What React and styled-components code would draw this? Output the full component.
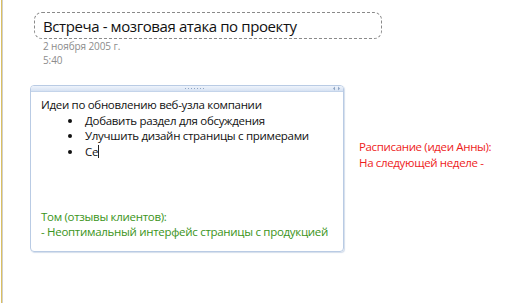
import React from 'react';
import styled, { createGlobalStyle } from 'styled-components';

const GlobalStyle = createGlobalStyle`
  html, body {
    margin: 0;
    padding: 0;
    background: #ffffff;
  }
  body {
    font-family: 'Open Sans', 'Noto Sans', sans-serif;
  }
`;

const Page = styled.div`
  width: 510px;
  height: 303px;
  box-sizing: border-box;
  position: relative;
  overflow: hidden;
  display: flex;
  flex-direction: column;
  padding: 12px 0 0 30px;

  &::before {
    content: '';
    position: absolute;
    left: 1px;
    top: 0;
    bottom: 0;
    width: 1px;
    background: #dcc060;
    box-shadow: 1px 0 0 #d0d0d0;
  }
`;

const Header = styled.div`
  display: flex;
  flex-direction: column;
  margin-left: 4px;
`;

const TitleBox = styled.div`
  width: 348px;
  height: 27px;
  box-sizing: border-box;
  border: 1px dashed #8a8a8a;
  border-radius: 8px;
  padding: 0 0 0 8px;
  display: flex;
  align-items: center;
  font-size: 15px;
  letter-spacing: -0.4px;
  color: #111;
`;

const Meta = styled.div`
  font-size: 10px;
  color: #8c8c8c;
  line-height: 14px;
  padding-left: 9px;
  letter-spacing: -0.1px;

  &:first-of-type {
    margin-top: 4px;
  }
`;

const Row = styled.div`
  display: flex;
  align-items: flex-start;
  margin-top: 18px;
`;

const Note = styled.div`
  width: 314px;
  height: 167px;
  box-sizing: border-box;
  border: 1px solid #b9cbe4;
  border-radius: 4px;
  box-shadow: 1px 1px 1px rgba(160, 180, 210, 0.45);
  display: flex;
  flex-direction: column;
  overflow: hidden;
`;

const Grip = styled.div`
  height: 5px;
  background: linear-gradient(#eef3fb, #d6e2f3);
  border-bottom: 1px solid #c4d4ea;
  display: flex;
  align-items: center;
  justify-content: center;
  position: relative;
`;

const Dots = styled.span`
  width: 20px;
  height: 1px;
  margin-left: 14px;
  background-image: radial-gradient(circle, #8fa5c4 0.6px, transparent 0.7px);
  background-size: 3px 1px;
`;

const Arrows = styled.svg`
  position: absolute;
  right: 2px;
  top: 0;
`;

const Body = styled.div`
  flex: 1;
  padding: 5px 6px 0 10px;
  font-size: 11.5px;
  line-height: 15.7px;
  letter-spacing: -0.3px;
  white-space: nowrap;
  color: #111;
  display: flex;
  flex-direction: column;
`;

const List = styled.ul`
  margin: 0;
  padding: 0;
  list-style: none;
`;

const Item = styled.li`
  display: flex;
  align-items: center;

  &::before {
    content: '';
    width: 4px;
    height: 4px;
    border-radius: 50%;
    background: #111;
    margin: 0 13px 0 27px;
  }
`;

const Caret = styled.span`
  display: inline-block;
  width: 1px;
  height: 13px;
  background: #222;
  vertical-align: -2px;
`;

const Feedback = styled.div`
  margin-top: auto;
  margin-bottom: 11px;
  color: ${({ $color }) => $color};
`;

const SideNote = styled.div`
  margin: 54px 0 0 15px;
  font-size: 11.5px;
  line-height: 16px;
  letter-spacing: -0.35px;
  color: #ee1c1c;
`;

export default function App() {
  return (
    <>
      <GlobalStyle />
      <Page>
        <Header>
          <TitleBox>Встреча - мозговая атака по проекту</TitleBox>
          <Meta>2 ноября 2005 г.</Meta>
          <Meta>5:40</Meta>
        </Header>
        <Row>
          <Note>
            <Grip>
              <Dots />
              <Arrows width="9" height="5" viewBox="0 0 9 5">
                <path d="M3 0.5 L1 2.5 L3 4.5 Z M6 0.5 L8 2.5 L6 4.5 Z" fill="#8fa5c4" />
              </Arrows>
            </Grip>
            <Body>
              <div>Идеи по обновлению веб-узла компании</div>
              <List>
                <Item>Добавить раздел для обсуждения</Item>
                <Item>Улучшить дизайн страницы с примерами</Item>
                <Item>Се<Caret /></Item>
              </List>
              <Feedback $color="#3a9420">
                <div>Том (отзывы клиентов):</div>
                <div>- Неоптимальный интерфейс страницы с продукцией</div>
              </Feedback>
            </Body>
          </Note>
          <SideNote>
            <div>Расписание (идеи Анны):</div>
            <div>На следующей неделе -</div>
          </SideNote>
        </Row>
      </Page>
    </>
  );
}
